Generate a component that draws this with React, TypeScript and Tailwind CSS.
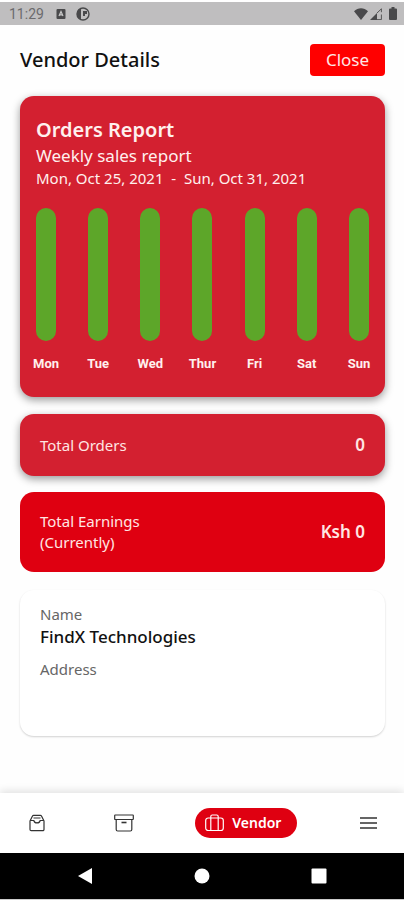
import type { ReactNode } from 'react'

const WEEK = ['Mon', 'Tue', 'Wed', 'Thur', 'Fri', 'Sat', 'Sun']

function StatusBar() {
  return (
    <div className="border-t-2 border-white bg-[#bfbebf]">
      <div className="flex h-[23px] items-center justify-between pl-[9px] pr-[7px] text-[#49494b]">
        <div className="flex items-center">
          <span className="w-[34px] font-[Roboto,sans-serif] text-[14px] leading-[16px] text-[#6b6b6d]">11:29</span>
          <svg className="ml-[13px]" width="10" height="12" viewBox="0 0 10 12" fill="none">
            <rect x="0.5" y="1" width="9" height="10" rx="1" fill="currentColor" />
            <path d="M3 8 5 3.5 7 8M3.7 6.8h2.6" stroke="#c9c9c9" strokeWidth="1.2" />
          </svg>
          <svg className="ml-[10px]" width="14" height="14" viewBox="0 0 14 14" fill="none">
            <circle cx="7" cy="7" r="6" stroke="currentColor" strokeWidth="1.4" />
            <path d="M1 7A6 6 0 0 1 5 1.5V12.6A6 6 0 0 1 1 7Z" fill="currentColor" />
            <path d="M7 4h4v3H9v2H7Z" fill="currentColor" />
          </svg>
        </div>
        <div className="flex items-center">
          <svg width="14" height="12" viewBox="0 0 14 12" fill="currentColor">
            <path d="M0 3.2C4-.7 10-.7 14 3.2L7 12Z" />
          </svg>
          <svg className="ml-[2px]" width="12" height="12" viewBox="0 0 12 12">
            <path d="M0 12 7 5v7Z" fill="currentColor" />
            <path d="M7 5 11.4.8v3.4M11.4 6.5v5.1H7" fill="none" stroke="currentColor" strokeWidth="0.9" />
          </svg>
          <svg className="ml-[7px]" width="8" height="13" viewBox="0 0 8 13" fill="currentColor">
            <path d="M2.5 0h3v1.5H7a1 1 0 0 1 1 1V12a1 1 0 0 1-1 1H1a1 1 0 0 1-1-1V2.5a1 1 0 0 1 1-1h1.5Z" />
          </svg>
        </div>
      </div>
    </div>
  )
}

function OrdersReport() {
  return (
    <section className="rounded-[14px] bg-[#d32030] px-4 pt-5 pb-[25px] text-[#fff0ee] shadow-[0_3px_8px_rgba(0,0,0,0.4)]">
      <h2 className="text-[20px] leading-[28px] font-semibold">Orders Report</h2>
      <p className="text-[17px] leading-[24px]">Weekly sales report</p>
      <p className="text-[15px] leading-[21px] whitespace-pre">Mon, Oct 25, 2021  -  Sun, Oct 31, 2021</p>
      <div className="mt-[19px] flex justify-between">
        {WEEK.map((day) => (
          <div key={day} className="flex w-5 flex-col items-center">
            <div className="h-[133px] w-5 rounded-full bg-[#5da629]" />
            <span className="mt-[15px] font-[Roboto,sans-serif] text-[13px] leading-[16px] font-bold">{day}</span>
          </div>
        ))}
      </div>
    </section>
  )
}

function NavButton({ label, children }: { label: string; children: ReactNode }) {
  return (
    <button type="button" aria-label={label} className="flex h-[30px] w-[30px] items-center justify-center text-[#333]">
      {children}
    </button>
  )
}

function TabBar() {
  return (
    <nav className="flex h-[60px] items-center justify-between bg-white pr-5 pl-[22px] shadow-[0_-2px_8px_rgba(0,0,0,0.12)]">
      <NavButton label="Orders">
        <svg width="16" height="18" viewBox="0 0 16 18" fill="none" stroke="currentColor" strokeWidth="1.2" strokeLinejoin="round">
          <path d="M1 7 3.5 2Q3.8 1.3 4.6 1.3h6.8Q12.2 1.3 12.5 2L15 7v8.4a1.2 1.2 0 0 1-1.2 1.2H2.2A1.2 1.2 0 0 1 1 15.4Z" />
          <path d="M1.2 6.5h3.6q.6 2.4 3.2 2.4t3.2-2.4h3.6M4.5 4h7" />
        </svg>
      </NavButton>
      <NavButton label="Products">
        <svg width="20" height="18" viewBox="0 0 20 18" fill="none" stroke="currentColor" strokeWidth="1.2" strokeLinejoin="round">
          <rect x="0.7" y="1" width="18.6" height="4.5" rx="0.5" />
          <path d="M2.2 5.5v10q0 1.5 1.5 1.5h12.6q1.5 0 1.5-1.5v-10" />
          <path d="M7.5 8.5h5" strokeWidth="1.6" />
        </svg>
      </NavButton>
      <button type="button" className="flex h-[30px] items-center gap-2 rounded-full bg-[#df0011] pr-4 pl-[10px] text-white">
        <svg width="19" height="18" viewBox="0 0 19 18" fill="none" stroke="currentColor" strokeWidth="1.2">
          <rect x="0.7" y="4" width="17.6" height="12.5" rx="2.5" />
          <path d="M5.8 4V2.5Q5.8 1 7.3 1h4.4q1.5 0 1.5 1.5V4M5.8 4v12.5M13.2 4v12.5" />
        </svg>
        <span className="text-[14px] leading-[20px] font-semibold">Vendor</span>
      </button>
      <NavButton label="Menu">
        <svg width="17" height="12" viewBox="0 0 17 12" fill="none" stroke="currentColor">
          <path d="M0 1h17M0 6h17M0 11h17" strokeWidth="1.3" />
        </svg>
      </NavButton>
    </nav>
  )
}

function SystemBar() {
  return (
    <div className="border-b-2 border-[#ccc] bg-black">
      <div className="flex h-[46px] items-center justify-around px-[26px] text-white">
        <button type="button" aria-label="Back">
          <svg width="16" height="18" viewBox="0 0 16 18" fill="currentColor"><path d="M1 9 15 1v16Z" /></svg>
        </button>
        <button type="button" aria-label="Home">
          <svg width="16" height="16" viewBox="0 0 16 16" fill="currentColor"><circle cx="8" cy="8" r="7.5" /></svg>
        </button>
        <button type="button" aria-label="Recent apps">
          <svg width="16" height="16" viewBox="0 0 16 16" fill="currentColor"><rect x="0.5" y="0.5" width="15" height="15" rx="1" /></svg>
        </button>
      </div>
    </div>
  )
}

export default function App() {
  return (
    <div className="flex min-h-screen flex-col bg-[#fefefe] font-['Noto_Sans',sans-serif]">
      <StatusBar />

      <header className="flex items-center justify-between pt-[19px] pr-[19px] pb-5 pl-5">
        <h1 className="text-[20px] leading-[32px] font-medium text-[#111]">Vendor Details</h1>
        <button type="button" className="h-8 w-[75px] rounded-[4px] bg-[#ff0000] text-[17px] leading-[24px] text-[#ffe6e6]">
          Close
        </button>
      </header>

      <main className="flex flex-1 flex-col pr-[19px] pb-[57px] pl-5">
        <OrdersReport />

        <section className="mt-[17px] flex h-[62px] items-center justify-between rounded-[14px] bg-[#d32030] px-5 text-[#ffe6e3] shadow-[0_3px_8px_rgba(0,0,0,0.4)]">
          <h2 className="text-[15px] leading-[21px]">Total Orders</h2>
          <p className="text-[17px] leading-[24px] font-semibold">0</p>
        </section>

        <section className="mt-4 flex h-20 items-center justify-between rounded-[14px] bg-[#df0011] px-5 text-[#ffe6e3]">
          <h2 className="text-[15px] leading-[21px]">
            Total Earnings
            <br />
            (Currently)
          </h2>
          <p className="text-[17px] leading-[24px] font-semibold">Ksh 0</p>
        </section>

        <dl className="mt-[18px] h-[146px] rounded-[14px] bg-white px-5 pt-[14px] shadow-[0_1px_2px_rgba(0,0,0,0.18)]">
          <dt className="text-[15px] leading-[21px] text-[#666]">Name</dt>
          <dd className="text-[17px] leading-[24px] font-medium text-[#111]">FindX Technologies</dd>
          <dt className="mt-[10px] text-[15px] leading-[21px] text-[#666]">Address</dt>
          <dd />
        </dl>
      </main>

      <TabBar />
      <SystemBar />
    </div>
  )
}
